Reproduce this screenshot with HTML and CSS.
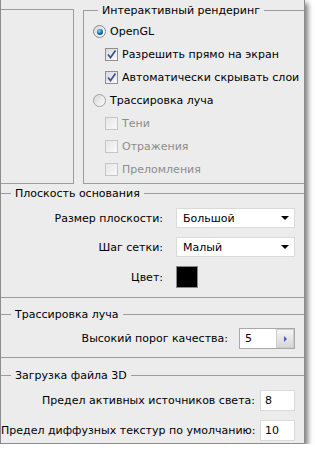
FILE: index.html
```html
<!DOCTYPE html>
<html lang="ru">
<head>
    <meta charset="UTF-8">
    <title>Параметры 3D</title>
    <link rel="stylesheet" href="styles.css">
</head>
<body>
    <div class="panel">
        <div class="top">
            <div class="preview"></div>

            <fieldset class="group group-render">
                <legend>Интерактивный рендеринг</legend>
                <div class="opt"><span class="radio on"></span>OpenGL</div>
                <div class="opt sub">
                    <span class="check on"><svg viewBox="0 0 11 11" width="11" height="11"><path d="M2 5.5 L4.5 8.5 L9.5 1.5" /></svg></span>Разрешить прямо на экран
                </div>
                <div class="opt sub">
                    <span class="check on"><svg viewBox="0 0 11 11" width="11" height="11"><path d="M2 5.5 L4.5 8.5 L9.5 1.5" /></svg></span>Автоматически скрывать слои
                </div>
                <div class="opt"><span class="radio"></span>Трассировка луча</div>
                <div class="opt sub disabled"><span class="check"></span>Тени</div>
                <div class="opt sub disabled"><span class="check"></span>Отражения</div>
                <div class="opt sub disabled"><span class="check"></span>Преломления</div>
            </fieldset>
        </div>

        <fieldset class="group group-plane">
            <legend>Плоскость основания</legend>
            <div class="form plane-form">
                <label>Размер плоскости:</label>
                <div class="select">Большой<span class="arrow"></span></div>
                <label>Шаг сетки:</label>
                <div class="select">Малый<span class="arrow"></span></div>
                <label>Цвет:</label>
                <div class="swatch"></div>
            </div>
        </fieldset>

        <fieldset class="group group-ray">
            <legend>Трассировка луча</legend>
            <div class="form ray-form">
                <label>Высокий порог качества:</label>
                <div class="spin">
                    <span class="spin-field">5</span>
                    <span class="spin-btn"><span class="spin-arrow"></span></span>
                </div>
            </div>
        </fieldset>

        <fieldset class="group group-load">
            <legend>Загрузка файла 3D</legend>
            <div class="form load-form">
                <label>Предел активных источников света:</label>
                <div class="field">8</div>
                <label>Предел диффузных текстур по умолчанию:</label>
                <div class="field">10</div>
            </div>
        </fieldset>
    </div>
</body>
</html>
```

FILE: styles.css
```css
body {
    margin: 0;
    background-color: #fff;
    font-family: "DejaVu Sans", sans-serif;
    font-size: 11px;
    color: #000;
}

.panel {
    width: 305px;
    box-sizing: border-box;
    background-color: #ececec;
    border-left: 1px solid #8c8c8c;
    border-right: 1px solid #8c8c8c;
    border-bottom: 1px solid #8c8c8c;
    padding-bottom: 2px;
    box-shadow: 3px 3px 5px rgba(0, 0, 0, 0.5);
}

/* top block: preview + render options */
.top {
    display: flex;
    align-items: stretch;
    padding-top: 4px;
}

.preview {
    width: 72px;
    margin-top: 5px;
    border-top: 1px solid #9c9c9c;
    border-right: 1px solid #9c9c9c;
    border-bottom: 1px solid #9c9c9c;
}

.group {
    margin: 0;
    padding: 0;
    min-width: 0;
    border: none;
    border-top: 1px solid #9c9c9c;
    border-bottom: 1px solid #9c9c9c;
}

.group legend {
    margin-left: 10px;
    padding: 0 4px;
    line-height: 13px;
}

.group-render {
    flex: 1;
    margin-left: 9px;
    padding: 3px 0 2px 9px;
    border-left: 1px solid #9c9c9c;
}

.group-render legend {
    margin-left: 5px;
}

.opt {
    display: flex;
    align-items: center;
    height: 23px;
}

.opt.sub {
    padding-left: 12px;
}

.opt.disabled {
    color: #8d8d8d;
}

.radio {
    width: 11px;
    height: 11px;
    margin-right: 4px;
    border: 1px solid #a3a3a3;
    border-radius: 50%;
    background: linear-gradient(135deg, #d6d6d6, #fdfdfd);
    display: flex;
    align-items: center;
    justify-content: center;
}

.radio.on {
    border-color: #8a8a8a;
}

.radio.on::after {
    content: "";
    width: 6px;
    height: 6px;
    border-radius: 50%;
    background: radial-gradient(circle at 40% 35%, #7fdcff, #0b62a8 55%, #073d72);
}

.check {
    width: 11px;
    height: 11px;
    margin-right: 4px;
    border: 1px solid #8f8f8f;
    background: linear-gradient(135deg, #d8d8d8, #fcfcfc);
    display: flex;
}

.check path {
    fill: none;
    stroke: #3d4f95;
    stroke-width: 1.7;
}

.disabled .check {
    border-color: #c6c6c6;
    background: linear-gradient(135deg, #e6e6e6, #f9f9f9);
}

/* label / control grids */
.form {
    display: grid;
    align-items: center;
}

.form label {
    text-align: right;
    white-space: nowrap;
}

.group-plane {
    margin-top: 3px;
    padding: 8px 0 9px;
}

.plane-form {
    grid-template-columns: 162px 119px;
    column-gap: 13px;
    row-gap: 9px;
}

.select {
    height: 20px;
    box-sizing: border-box;
    display: flex;
    align-items: center;
    justify-content: space-between;
    padding: 0 5px 0 6px;
    background-color: #fff;
    border: 1px solid #dadada;
}

.arrow {
    width: 0;
    height: 0;
    border-left: 4px solid transparent;
    border-right: 4px solid transparent;
    border-top: 4px solid #000;
}

.swatch {
    width: 20px;
    height: 20px;
    background-color: #000;
    border: 1px solid #8a8a8a;
}

.group-ray {
    margin-top: 10px;
    padding: 7px 0 8px;
}

.ray-form {
    grid-template-columns: 227px 56px;
    column-gap: 11px;
}

.spin {
    height: 21px;
    box-sizing: border-box;
    display: flex;
    border: 1px solid #a9a9a9;
    background-color: #fff;
}

.spin-field {
    flex: 1;
    display: flex;
    align-items: center;
    padding-left: 5px;
}

.spin-btn {
    width: 16px;
    display: flex;
    align-items: center;
    justify-content: center;
    border: 1px solid #cdcdcd;
    background: linear-gradient(#f6f6f6, #d6d6d6);
}

.spin-arrow {
    width: 0;
    height: 0;
    border-top: 3px solid transparent;
    border-bottom: 3px solid transparent;
    border-left: 3px solid #3a64b5;
}

.group-load {
    margin-top: 11px;
    padding: 8px 0 0;
    border-bottom: none;
}

.load-form {
    grid-template-columns: 254px 35px;
    column-gap: 5px;
    row-gap: 9px;
}

.field {
    height: 21px;
    box-sizing: border-box;
    display: flex;
    align-items: center;
    padding-left: 4px;
    background-color: #fff;
    border: 1px solid #dadada;
}
```
